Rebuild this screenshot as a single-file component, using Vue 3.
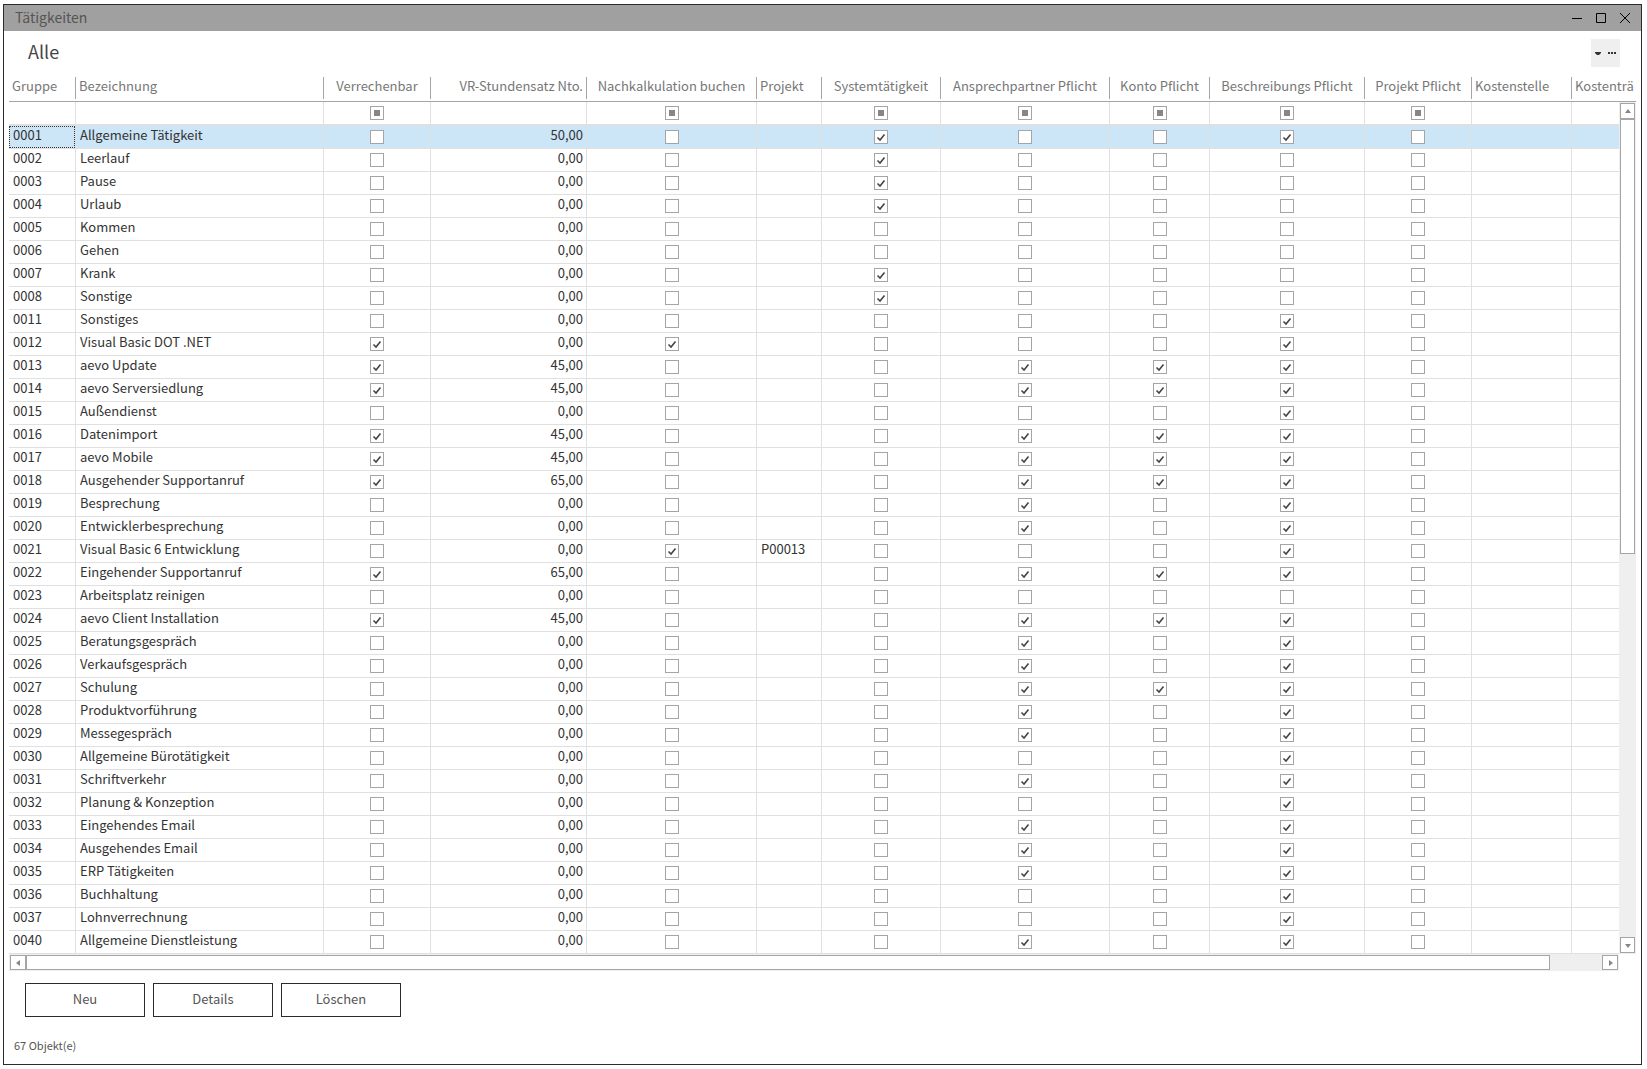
<script setup>
const columns = [
  { key: 'group', label: 'Gruppe', width: 67, kind: 'text' },
  { key: 'name', label: 'Bezeichnung', width: 248, kind: 'text' },
  { key: 'V', label: 'Verrechenbar', width: 107, kind: 'check' },
  { key: 'rate', label: 'VR-Stundensatz Nto.', width: 156, kind: 'number' },
  { key: 'N', label: 'Nachkalkulation buchen', width: 170, kind: 'check' },
  { key: 'project', label: 'Projekt', width: 65, kind: 'text' },
  { key: 'S', label: 'Systemtätigkeit', width: 119, kind: 'check' },
  { key: 'A', label: 'Ansprechpartner Pflicht', width: 169, kind: 'check' },
  { key: 'K', label: 'Konto Pflicht', width: 100, kind: 'check' },
  { key: 'B', label: 'Beschreibungs Pflicht', width: 155, kind: 'check' },
  { key: 'P', label: 'Projekt Pflicht', width: 107, kind: 'check' },
  { key: 'costCentre', label: 'Kostenstelle', width: 100, kind: 'text' },
  { key: 'costUnit', label: 'Kostenträ', width: 0, kind: 'text' },
]

// group, name, hourly rate, letters of the ticked columns, project
const rows = [
  ['0001', 'Allgemeine Tätigkeit', '50,00', 'SB'],
  ['0002', 'Leerlauf', '0,00', 'S'],
  ['0003', 'Pause', '0,00', 'S'],
  ['0004', 'Urlaub', '0,00', 'S'],
  ['0005', 'Kommen', '0,00', ''],
  ['0006', 'Gehen', '0,00', ''],
  ['0007', 'Krank', '0,00', 'S'],
  ['0008', 'Sonstige', '0,00', 'S'],
  ['0011', 'Sonstiges', '0,00', 'B'],
  ['0012', 'Visual Basic DOT .NET', '0,00', 'VNB'],
  ['0013', 'aevo Update', '45,00', 'VAKB'],
  ['0014', 'aevo Serversiedlung', '45,00', 'VAKB'],
  ['0015', 'Außendienst', '0,00', 'B'],
  ['0016', 'Datenimport', '45,00', 'VAKB'],
  ['0017', 'aevo Mobile', '45,00', 'VAKB'],
  ['0018', 'Ausgehender Supportanruf', '65,00', 'VAKB'],
  ['0019', 'Besprechung', '0,00', 'AB'],
  ['0020', 'Entwicklerbesprechung', '0,00', 'AB'],
  ['0021', 'Visual Basic 6 Entwicklung', '0,00', 'NB', 'P00013'],
  ['0022', 'Eingehender Supportanruf', '65,00', 'VAKB'],
  ['0023', 'Arbeitsplatz reinigen', '0,00', ''],
  ['0024', 'aevo Client Installation', '45,00', 'VAKB'],
  ['0025', 'Beratungsgespräch', '0,00', 'AB'],
  ['0026', 'Verkaufsgespräch', '0,00', 'AB'],
  ['0027', 'Schulung', '0,00', 'AKB'],
  ['0028', 'Produktvorführung', '0,00', 'AB'],
  ['0029', 'Messegespräch', '0,00', 'AB'],
  ['0030', 'Allgemeine Bürotätigkeit', '0,00', 'B'],
  ['0031', 'Schriftverkehr', '0,00', 'AB'],
  ['0032', 'Planung & Konzeption', '0,00', 'B'],
  ['0033', 'Eingehendes Email', '0,00', 'AB'],
  ['0034', 'Ausgehendes Email', '0,00', 'AB'],
  ['0035', 'ERP Tätigkeiten', '0,00', 'AB'],
  ['0036', 'Buchhaltung', '0,00', 'B'],
  ['0037', 'Lohnverrechnung', '0,00', 'B'],
  ['0040', 'Allgemeine Dienstleistung', '0,00', 'AB'],
].map(([group, name, rate, flags, project = '']) => ({ group, name, rate, flags, project }))

const actions = ['Neu', 'Details', 'Löschen']
</script>

<template>
  <div class="desktop">
    <main class="window">
      <header class="titlebar">
        <span class="title">Tätigkeiten</span>
        <div class="controls">
          <button type="button" aria-label="Minimieren">
            <svg width="12" height="12" viewBox="0 0 12 12"><path d="M1 6.5H11" /></svg>
          </button>
          <button type="button" aria-label="Maximieren">
            <svg width="12" height="12" viewBox="0 0 12 12"><path d="M1.5 1.5H10.5V10.5H1.5Z" /></svg>
          </button>
          <button type="button" aria-label="Schließen">
            <svg width="12" height="12" viewBox="0 0 12 12"><path d="M1 1L11 11M11 1L1 11" /></svg>
          </button>
        </div>
      </header>

      <div class="viewbar">
        <h1>Alle</h1>
        <button type="button" class="more" aria-label="Ansicht wählen">
          <svg width="22" height="6" viewBox="0 0 22 6">
            <path d="M0 2H6V3L4 5H2L0 3Z" />
            <path d="M13 2h2v2h-2zM16 2h2v2h-2zM19 2h2v2h-2z" />
          </svg>
        </button>
      </div>

      <section class="grid">
        <div class="sheet">
          <table>
            <colgroup>
              <col v-for="c in columns" :key="c.key" :style="c.width ? { width: c.width + 'px' } : null" />
            </colgroup>
            <thead>
              <tr>
                <th v-for="c in columns" :key="c.key" scope="col" :class="c.kind"><div>{{ c.label }}</div></th>
              </tr>
            </thead>
            <tbody>
              <tr class="filter">
                <td v-for="c in columns" :key="c.key" :class="c.kind">
                  <input v-if="c.kind === 'check'" type="checkbox" :indeterminate.prop="true" :aria-label="c.label + ' filtern'" />
                </td>
              </tr>
              <tr v-for="(r, i) in rows" :key="r.group" :class="{ selected: i === 0 }">
                <td v-for="c in columns" :key="c.key" :class="c.kind">
                  <input v-if="c.kind === 'check'" type="checkbox" :checked="r.flags.includes(c.key)" :aria-label="c.label + ' ' + r.group" />
                  <template v-else>{{ r[c.key] }}</template>
                </td>
              </tr>
            </tbody>
          </table>
        </div>

        <div class="bar vertical">
          <button type="button" class="step" aria-label="Nach oben">
            <svg width="8" height="8" viewBox="0 0 8 8"><path d="M1 6H7L4 2Z" /></svg>
          </button>
          <div class="thumb"></div>
          <div class="rest"></div>
          <button type="button" class="step" aria-label="Nach unten">
            <svg width="8" height="8" viewBox="0 0 8 8"><path d="M1 3H7L4 7Z" /></svg>
          </button>
        </div>

        <div class="bar horizontal">
          <button type="button" class="step" aria-label="Nach links">
            <svg width="8" height="8" viewBox="0 0 8 8"><path d="M6 1V7L2 4Z" /></svg>
          </button>
          <div class="thumb"></div>
          <div class="rest"></div>
          <button type="button" class="step" aria-label="Nach rechts">
            <svg width="8" height="8" viewBox="0 0 8 8"><path d="M3 1V7L7 4Z" /></svg>
          </button>
        </div>
      </section>

      <div class="actions">
        <button v-for="a in actions" :key="a" type="button">{{ a }}</button>
      </div>

      <footer class="status">67 Objekt(e)</footer>
    </main>
  </div>
</template>

<style>
body {
  margin: 0;
  background: #fff;
}
</style>

<style scoped>
.desktop {
  box-sizing: border-box;
  min-height: 100vh;
  display: flex;
  padding: 4px 5px 4px 3px;
  font: 13px/18px "Noto Sans CJK SC", "Noto Sans", sans-serif;
  color: #333;
}

button {
  margin: 0;
  padding: 0;
  border: 0;
  background: none;
  font: inherit;
  color: inherit;
}

svg {
  display: block;
}

.window {
  flex: 1;
  min-width: 0;
  border: 1px solid #2b2b2f;
  background: #fff;
}

.titlebar {
  display: flex;
  align-items: center;
  justify-content: space-between;
  height: 26px;
  padding: 0 10px 0 11px;
  background: #a0a0a0;
  color: #555;
}

.title {
  padding-bottom: 2px;
  font-size: 14px;
}

.controls {
  display: flex;
  gap: 12px;
}

.controls path {
  fill: none;
  stroke: #000;
}

.viewbar {
  display: flex;
  align-items: center;
  justify-content: space-between;
  height: 28px;
  padding: 8px 21px 10px 24px;
}

h1 {
  margin: 0 0 4px;
  font-size: 18px;
  line-height: 24px;
  font-weight: 400;
  color: #444;
}

.more {
  display: flex;
  align-items: center;
  justify-content: center;
  width: 29px;
  height: 28px;
  background: #efefef;
}

.more path {
  fill: #333;
}

/* The vertical scroll bar shares the sheet's last 17 pixels, below the header */
.grid {
  display: grid;
  grid-template-columns: minmax(0, 1fr) 17px;
  margin: 0 5px;
}

.sheet {
  grid-area: 1 / 1 / 2 / 3;
  overflow: hidden;
}

table {
  width: 100%;
  table-layout: fixed;
  border-collapse: separate;
  border-spacing: 0;
}

th {
  padding: 0 0 2px;
  border-bottom: 1px solid #a5a5a5;
  font-weight: 400;
  text-align: left;
  color: #777;
}

th div {
  height: 22px;
  padding: 0 3px;
  border-right: 1px solid #a5a5a5;
  white-space: nowrap;
}

td {
  box-sizing: border-box;
  height: 23px;
  padding: 0 3px 4px 4px;
  border-right: 1px solid #e0e0e0;
  border-bottom: 1px solid #e0e0e0;
  white-space: nowrap;
}

th:last-child div,
td:last-child {
  border-right: 0;
}

.number {
  text-align: right;
}

.check {
  text-align: center;
}

td.check {
  padding: 0;
}

.filter td {
  height: 24px;
  border-bottom-width: 2px;
}

.selected td {
  background: #cce5f7;
}

.selected td:first-child {
  position: relative;
}

.selected td:first-child::after {
  content: "";
  position: absolute;
  inset: 0;
  border: 1px dotted #333;
}

input {
  appearance: none;
  display: block;
  box-sizing: border-box;
  width: 14px;
  height: 14px;
  margin: 0 auto;
  border: 1px solid #a5a5a5;
  background: #fff center / 12px 12px no-repeat;
}

input:checked {
  background-image: url("data:image/svg+xml,%3Csvg xmlns='http://www.w3.org/2000/svg' viewBox='0 0 12 12'%3E%3Cpath d='M2.5 6.5L5 9L9.5 3.5' fill='none' stroke='%23444' stroke-width='1.6'/%3E%3C/svg%3E");
}

input:indeterminate {
  background: #868686;
  box-shadow: inset 0 0 0 3px #fff;
}

.bar {
  display: flex;
  box-sizing: border-box;
  padding: 1px;
  background: #efefef;
}

.step,
.thumb {
  box-sizing: border-box;
  border: 1px solid #a5a5a5;
  background: #fff;
}

.step {
  display: flex;
  align-items: center;
  justify-content: center;
  flex: none;
  width: 15px;
  height: 16px;
}

.step path {
  fill: #868686;
}

.vertical {
  grid-area: 1 / 2;
  flex-direction: column;
  margin-top: 25px;
}

.vertical .thumb {
  flex: 434;
}

.vertical .rest {
  flex: 384;
}

.horizontal {
  grid-area: 2 / 1;
  height: 17px;
}

.horizontal .step {
  width: 16px;
  height: 15px;
}

.horizontal .thumb {
  flex: 1524;
}

.horizontal .rest {
  flex: 52;
}

.actions {
  display: flex;
  gap: 8px;
  padding: 12px 21px 0;
}

.actions button {
  width: 120px;
  height: 34px;
  padding-bottom: 2px;
  border: 1px solid #2b2b2f;
  color: #555;
}

.status {
  padding: 19px 10px 9px;
  font-size: 11px;
  color: #555;
}
</style>
